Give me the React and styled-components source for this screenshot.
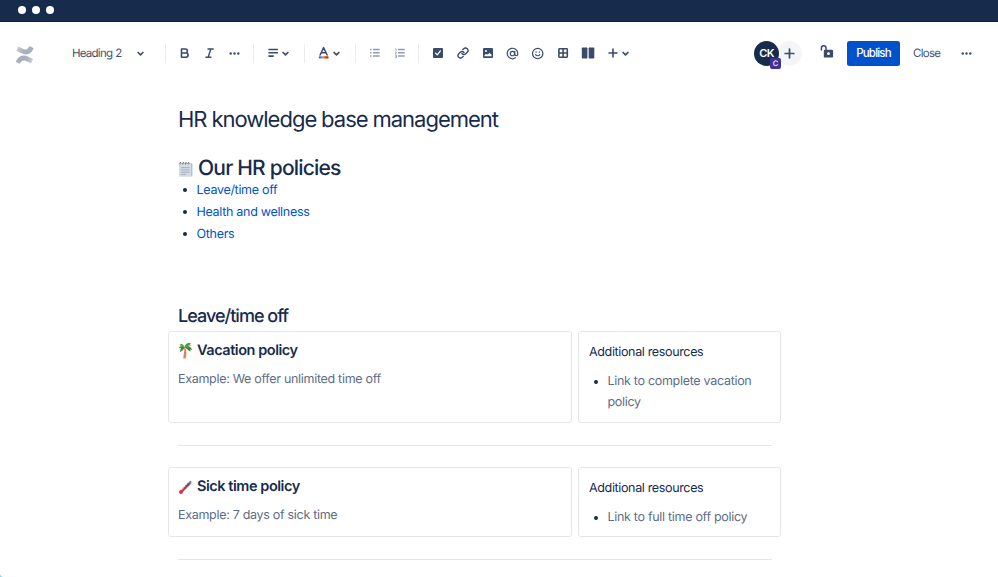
import React from "react";
import styled, { createGlobalStyle } from "styled-components";

const NAVY = "#172b4d";
const ICON = "#3a4b6b";

const GlobalStyle = createGlobalStyle`
  * { box-sizing: border-box; }
  body {
    margin: 0;
    background: #79e2f2;
    color: ${NAVY};
    font-family: Inter, "Liberation Sans", sans-serif;
    text-rendering: geometricPrecision;
    overflow: hidden;
  }
  h1, h2, h3, h4, p, ul { margin: 0; padding: 0; }
  svg { display: block; flex: none; }
`;

const Page = styled.div`
  width: 998px;
  height: 577px;
  overflow: hidden;
  display: flex;
  flex-direction: column;
  background: #fff;
  border-bottom-left-radius: 4px;
`;

const WindowBar = styled.div`
  height: 22px;
  flex: none;
  display: flex;
  gap: 6px;
  padding: 6px 0 0 17.5px;
  background: #172b4d;
  border-bottom: 1px solid #0f2144;
`;

const WindowDot = styled.i`
  width: 8px;
  height: 8px;
  border-radius: 50%;
  background: #fff;
`;

const Toolbar = styled.header`
  height: 62px;
  flex: none;
  display: flex;
  align-items: center;
  padding-left: 15px;
  color: ${ICON};
`;

const Logo = styled.div`
  width: 57px;
  padding-top: 4px;
`;

const StyleSelect = styled.div`
  width: 93px;
  display: flex;
  align-items: center;
  font-size: 11.5px;
  letter-spacing: -0.75px;
  word-spacing: 0.5px;
  color: #42526e;
`;

const SelectLabel = styled.span`
  width: 62.5px;
`;

const Slot = styled.span`
  width: 25px;
  height: 24px;
  flex: none;
  display: flex;
  align-items: center;
  justify-content: center;
  opacity: ${(p) => (p.$muted ? 0.55 : 1)};
`;

const Caret = styled.span`
  width: 11px;
  margin: 0 ${(p) => p.$after || 0}px 0 -5px;
`;

const Divider = styled.span`
  width: 1px;
  height: 19px;
  flex: none;
  margin: 0 6px;
  background: #ebecf0;
  &:first-of-type { margin-left: 0; }
`;

const Actions = styled.div`
  margin-left: auto;
  width: 244px;
  display: flex;
  align-items: center;
`;

const Avatar = styled.span`
  position: relative;
  z-index: 1;
  width: 25px;
  height: 25px;
  border-radius: 50%;
  display: grid;
  place-items: center;
  background: #172b4d;
  color: #fff;
  font-size: 11px;
  font-weight: 600;
  letter-spacing: -0.6px;
`;

const AvatarBadge = styled.span`
  position: absolute;
  right: -2px;
  bottom: -3px;
  width: 11px;
  height: 11px;
  border-radius: 2px;
  display: grid;
  place-items: center;
  background: #403294;
  color: #fff;
  font-size: 7.5px;
  font-weight: 500;
  line-height: 11px;
  letter-spacing: 0;
`;

const AddPerson = styled.span`
  width: 25px;
  height: 25px;
  margin: 0 18px 0 -2px;
  border-radius: 50%;
  display: grid;
  place-items: center;
  background: #f4f5f7;
`;

const PublishButton = styled.button`
  width: 53px;
  height: 25px;
  margin: 0 13px;
  padding: 0;
  border: 0;
  border-radius: 2.5px;
  background: #0052cc;
  color: #fff;
  font: 500 11.5px Inter, "Liberation Sans", sans-serif;
  letter-spacing: -0.8px;
`;

const CloseLabel = styled.span`
  width: 48px;
  font-size: 11.5px;
  letter-spacing: -0.7px;
  color: #42526e;
`;

const Document = styled.main`
  width: 613px;
  margin-left: 168px;
  padding-top: 22px;
`;

const Inset = styled.div`
  padding-left: 10px;
`;

const Title = styled.h1`
  font-size: 22px;
  font-weight: 400;
  line-height: 28px;
  letter-spacing: -1px;
  word-spacing: -0.3px;
  white-space: nowrap;
`;

const SectionTitle = styled.h2`
  margin-top: 21px;
  display: flex;
  align-items: center;
  gap: 4px;
  font-size: 21px;
  font-weight: 550;
  line-height: 28px;
  letter-spacing: -0.8px;
`;

const LinkList = styled.ul`
  list-style: none;
  margin-top: -4px;
`;

const LinkItem = styled.li`
  display: flex;
  align-items: center;
  height: 22px;
  font-size: 12.5px;
  letter-spacing: -0.3px;
  color: #0052cc;
  &::before {
    content: "";
    width: 4px;
    height: 4px;
    margin: 0 9.5px 0 5px;
    border-radius: 50%;
    background: ${NAVY};
  }
`;

const Subtitle = styled.h3`
  margin-top: 60px;
  height: 26px;
  font-size: 18px;
  font-weight: 500;
  line-height: 23px;
  letter-spacing: -0.98px;
`;

const PolicyRow = styled.section`
  display: grid;
  grid-template-columns: 404px 203px;
  gap: 6px;
  width: 613px;
  height: ${(p) => p.$height}px;
`;

const Panel = styled.div`
  border: 1px solid #e4e6ea;
  border-radius: 3px;
  padding: ${(p) => p.$pad};
`;

const PolicyTitle = styled.h4`
  display: flex;
  align-items: center;
  gap: 4px;
  height: 21px;
  font-size: 14.5px;
  font-weight: 600;
  letter-spacing: -0.45px;
`;

const PolicyText = styled.p`
  margin-top: 9px;
  font-size: 12.5px;
  line-height: 20px;
  letter-spacing: -0.3px;
  color: #5e6c84;
`;

const ResourceTitle = styled.p`
  font-size: 12.5px;
  line-height: 20px;
  letter-spacing: -0.35px;
`;

const ResourceItem = styled.p`
  display: flex;
  margin-top: 8px;
  font-size: 12.5px;
  line-height: 21px;
  letter-spacing: -0.3px;
  color: #5e6c84;
  &::before {
    content: "";
    flex: none;
    width: 4px;
    height: 4px;
    margin: 8.5px 9.5px 0 5px;
    border-radius: 50%;
    background: ${NAVY};
  }
`;

const Rule = styled.hr`
  width: 594px;
  height: 1px;
  margin: 22px 0 21px 10px;
  border: 0;
  background: #e4e6ea;
`;

const Chevron = () => (
  <svg width="11" height="11" viewBox="0 0 11 11" fill="none" stroke="currentColor" strokeWidth="1.7" strokeLinecap="round" strokeLinejoin="round">
    <path d="M3.1 4.5 5.5 6.8 7.9 4.5" />
  </svg>
);

const More = () => (
  <svg width="11" height="11" viewBox="0 0 11 11" fill="currentColor">
    <circle cx="1.7" cy="5.5" r="1.2" /><circle cx="5.5" cy="5.5" r="1.2" /><circle cx="9.3" cy="5.5" r="1.2" />
  </svg>
);

const ConfluenceMark = () => (
  <svg width="20" height="20" viewBox="0 0 20 20">
    <defs>
      <linearGradient id="waveTop" x1="1" y1="0" x2="0" y2="0"><stop offset="0" stopColor="#a5afbd" /><stop offset=".6" stopColor="#a9b2bf" /><stop offset="1" stopColor="#c9ced7" /></linearGradient>
      <linearGradient id="waveBottom" x1="0" y1="0" x2="1" y2="0"><stop offset="0" stopColor="#a5afbd" /><stop offset=".6" stopColor="#a9b2bf" /><stop offset="1" stopColor="#c9ced7" /></linearGradient>
    </defs>
    <path d="M3.2 1.5C6.2 3.1 8.5 4.8 10.5 4.6 12.4 4.4 13.4 3.1 14.6 1.1L18.7 3.2C16.7 7.2 14.4 9.3 11.2 9.4 8.1 9.5 5.1 7.6 1.4 6Z" fill="url(#waveTop)" />
    <path d="M.7 16.7C2.7 12.7 5 10.7 8.1 10.5 11.4 10.3 14.3 12.2 18.1 14L16 18.2C12.9 16.8 10.7 15.2 8.6 15.4 6.9 15.6 6 16.9 4.8 18.8Z" fill="url(#waveBottom)" />
  </svg>
);

const Bold = () => (
  <svg width="12" height="12" viewBox="0 0 12 12" fill="none" stroke="currentColor" strokeWidth="1.6" strokeLinejoin="round">
    <path d="M2.5 2h3.9a2 2 0 0 1 0 4H2.5zM2.5 6H7a2.1 2.1 0 0 1 0 4.2H2.5z" />
  </svg>
);

const Italic = () => (
  <svg width="12" height="12" viewBox="0 0 12 12" fill="none" stroke="currentColor" strokeWidth="1.4" strokeLinecap="round">
    <path d="M4 2h5.2M1.9 10.2h5M6.8 2 4.2 10.2" />
  </svg>
);

const AlignLeft = () => (
  <svg width="12" height="12" viewBox="0 0 12 12" fill="none" stroke="currentColor" strokeWidth="1.6" strokeLinecap="round">
    <path d="M2 2.5h8.4M2 5.8h8.4M2 9.1h4.2" />
  </svg>
);

const TextColor = () => (
  <svg width="13" height="14" viewBox="0 0 13 14">
    <defs>
      <linearGradient id="inkBar"><stop offset="0" stopColor="#5243aa" /><stop offset=".3" stopColor="#4c9aff" /><stop offset=".5" stopColor="#ff8b00" /><stop offset=".7" stopColor="#de350b" /><stop offset="1" stopColor="#bf2600" /></linearGradient>
    </defs>
    <path d="M3.1 9 6.6 1.6 10.1 9M4.3 6.7h4.6" fill="none" stroke="currentColor" strokeWidth="1.5" strokeLinecap="round" strokeLinejoin="round" />
    <rect x="1.8" y="10.3" width="9.8" height="2.3" rx=".9" fill="url(#inkBar)" />
  </svg>
);

const BulletList = () => (
  <svg width="12" height="12" viewBox="0 0 12 12" fill="currentColor">
    <path d="M1 1.7h1.5v1.5H1zM1 5h1.5v1.5H1zM1 8.3h1.5v1.5H1zM4 1.7h6.7v1.5H4zM4 5h6.7v1.5H4zM4 8.3h6.7v1.5H4z" />
  </svg>
);

const NumberList = () => (
  <svg width="12" height="12" viewBox="0 0 12 12">
    <path d="M4 1.7h6.7v1.5H4zM4 5h6.7v1.5H4zM4 8.3h6.7v1.5H4z" fill="currentColor" />
    <path d="M1.2 1.8h.9v2M1 5h1.4v.6L1.1 7h1.4M1 8.3h1.5v2.5H1M1.4 9.5h1" fill="none" stroke="currentColor" strokeWidth=".8" />
  </svg>
);

const CheckBox = () => (
  <svg width="12" height="12" viewBox="0 0 12 12">
    <rect x="1" y="1" width="10" height="10" rx="1" fill="currentColor" />
    <path d="m3.6 6.1 1.7 1.8 3.1-4" fill="none" stroke="#fff" strokeWidth="1.3" strokeLinecap="round" strokeLinejoin="round" />
  </svg>
);

const LinkIcon = () => (
  <svg width="12" height="12" viewBox="0 0 24 24" fill="none" stroke="currentColor" strokeWidth="2.7" strokeLinecap="round">
    <path d="M10 13a5 5 0 0 0 7.5.5l3-3a5 5 0 0 0-7.1-7.1l-1.7 1.7" />
    <path d="M14 11a5 5 0 0 0-7.5-.5l-3 3a5 5 0 0 0 7.1 7.1l1.7-1.7" />
  </svg>
);

const ImageIcon = () => (
  <svg width="12" height="12" viewBox="0 0 12 12">
    <rect x="1" y="1" width="10" height="10" rx="1" fill="currentColor" />
    <circle cx="4" cy="4" r="1" fill="#fff" />
    <path d="M2.5 9.3V8l1.6-1.1 1.4.7 2-1.6 2 1.5v1.8z" fill="#fff" />
  </svg>
);

const Mention = () => (
  <svg width="13" height="13" viewBox="0 0 24 24" fill="none" stroke="currentColor" strokeWidth="2.2" strokeLinecap="round">
    <circle cx="12" cy="12" r="4.1" />
    <path d="M16.1 8v5.2a2.8 2.8 0 0 0 5.6 0V12a9.7 9.7 0 1 0-4.2 8" />
  </svg>
);

const Smile = () => (
  <svg width="13" height="13" viewBox="0 0 13 13" fill="none" stroke="currentColor" strokeWidth="1.25" strokeLinecap="round">
    <circle cx="6.7" cy="6.5" r="5.2" />
    <path d="M4.6 7.6c.8 1.6 3.4 1.6 4.2 0" strokeWidth="1.1" />
    <path d="M5.1 5v.2M8.3 5v.2" strokeWidth="1.3" />
  </svg>
);

const TableIcon = () => (
  <svg width="12" height="12" viewBox="0 0 12 12" fill="none" stroke="currentColor" strokeWidth="1.6">
    <rect x="1.9" y="1.8" width="8.4" height="8.4" rx=".6" />
    <path d="M6.1 2v8M2 6h8" />
  </svg>
);

const Columns = () => (
  <svg width="14" height="12" viewBox="0 0 14 12" fill="currentColor">
    <rect x=".8" y=".6" width="5.6" height="10.8" rx=".7" /><rect x="7.7" y=".6" width="5.6" height="10.8" rx=".7" />
  </svg>
);

const Plus = ({ size = 12 }) => (
  <svg width={size} height={size} viewBox="0 0 12 12" fill="none" stroke="currentColor" strokeWidth="1.6" strokeLinecap="round">
    <path d="M6 2v8M2 6h8" />
  </svg>
);

const Unlocked = () => (
  <svg width="14" height="16" viewBox="0 0 14 16">
    <path d="M1.4 5V3.1a2.3 2.3 0 0 1 4.6 0v2.7" fill="none" stroke="currentColor" strokeWidth="1.5" strokeLinecap="round" />
    <rect x="3.8" y="4.8" width="9.3" height="7.8" rx="1.2" fill="currentColor" />
    <circle cx="8.5" cy="8.7" r="1.4" fill="#fff" />
  </svg>
);

const Notepad = () => (
  <svg width="16" height="18" viewBox="0 0 16 18">
    <path d="M12.4 3.3h1.4c.4 0 .6.3.6.7v11.6L12.4 17z" fill="#8fc1ee" />
    <rect x="1" y="2.7" width="12.2" height="14" rx=".8" fill="#d3dbe4" />
    <path d="M3 7.6h8.5M3 9.9h8.5M3 12.2h8.5M3 14.4h5" stroke="#9ba7b7" strokeWidth=".8" />
    <path d="M2.1 4.4c-.5-2 .9-2.4 1.1-1M4.8 4.4c-.5-2 .9-2.4 1.1-1M7.5 4.4c-.5-2 .9-2.4 1.1-1M10.2 4.4c-.5-2 .9-2.4 1.1-1" fill="none" stroke="#4f5660" strokeWidth=".9" />
  </svg>
);

const PalmTree = () => (
  <svg width="15" height="17" viewBox="0 0 15 17">
    <path d="M7 5.1C8.5 8 8.5 12 8 16.4H5.1C5.9 12 6.5 8.5 6.1 5.4Z" fill="#de8b6b" />
    <path d="M6.5 8.2h1.7M6.2 10.6h2.1M5.8 13h2.4" stroke="#c36450" strokeWidth=".6" />
    <path d="M6.7 5.1C4.9 3.3 2.2 3.4.6 6.4L2.9 6.1 1.8 10.2C4 9.3 5.8 7.7 6.9 5.1Z" fill="#448b35" />
    <path d="M6.6 5.2C5.7 2.2 3.3.8 1.1 2.3l1.8.5L1.6 4.6C3.6 4.1 5.3 4.3 6.6 5.2Z" fill="#65a842" />
    <path d="M6.6 5.2C7 1.9 9.5 0 13.4 1.6l-1.9.9 2.2 1.1C10.9 3.3 8.7 4 6.6 5.2Z" fill="#50983b" />
    <path d="M6.5 5c2.2-2 5.9-1.5 7.8 2.9l-2.1-.7.2 2.5C10.4 8.3 8.7 6.7 6.5 5Z" fill="#36782e" />
    <path d="M6.8 4.9c1.6-.3 3.3.2 4.4 1.7" fill="none" stroke="#82bc55" strokeWidth=".8" />
  </svg>
);

const Thermometer = () => (
  <svg width="15" height="16" viewBox="0 0 15 16" strokeLinecap="round">
    <path d="M3 13.1 12.5 3.4" stroke="#cbd2d8" strokeWidth="3.6" />
    <path d="m8.1 7.2 4.2-4.3" stroke="#667785" strokeWidth="1.5" />
    <path d="M3.2 12.9 11.6 4.6" stroke="#df2635" strokeWidth="1.8" />
    <circle cx="3" cy="13" r="1.9" fill="#e52d39" />
    <path d="m6 8.3.9.9M7.8 6.5l.9.9M9.6 4.7l.9.9" stroke="#59434d" strokeWidth=".7" />
  </svg>
);

function Policy({ height, icon, title, text, resource }) {
  return (
    <PolicyRow $height={height}>
      <Panel $pad="8px 9px 0">
        <PolicyTitle>{icon}{title}</PolicyTitle>
        <PolicyText>{text}</PolicyText>
      </Panel>
      <Panel $pad="11px 20px 0 10px">
        <ResourceTitle>Additional resources</ResourceTitle>
        <ResourceItem>{resource}</ResourceItem>
      </Panel>
    </PolicyRow>
  );
}

const insertTools = [CheckBox, LinkIcon, ImageIcon, Mention, Smile, TableIcon, Columns, Plus];

export default function App() {
  return (
    <Page>
      <GlobalStyle />
      <WindowBar><WindowDot /><WindowDot /><WindowDot /></WindowBar>
      <Toolbar>
        <Logo><ConfluenceMark /></Logo>
        <StyleSelect><SelectLabel>Heading 2</SelectLabel><Chevron /></StyleSelect>
        <Divider />
        <Slot><Bold /></Slot>
        <Slot><Italic /></Slot>
        <Slot><More /></Slot>
        <Divider />
        <Slot><AlignLeft /></Slot>
        <Caret $after={7}><Chevron /></Caret>
        <Divider />
        <Slot><TextColor /></Slot>
        <Caret $after={7}><Chevron /></Caret>
        <Divider />
        <Slot $muted><BulletList /></Slot>
        <Slot $muted><NumberList /></Slot>
        <Divider />
        {insertTools.map((Tool, i) => <Slot key={i}><Tool /></Slot>)}
        <Caret><Chevron /></Caret>
        <Actions>
          <Avatar>CK<AvatarBadge>C</AvatarBadge></Avatar>
          <AddPerson><Plus size={13} /></AddPerson>
          <Unlocked />
          <PublishButton>Publish</PublishButton>
          <CloseLabel>Close</CloseLabel>
          <More />
        </Actions>
      </Toolbar>
      <Document>
        <Inset>
          <Title>HR knowledge base management</Title>
          <SectionTitle><Notepad />Our HR policies</SectionTitle>
          <LinkList>
            <LinkItem>Leave/time off</LinkItem>
            <LinkItem>Health and wellness</LinkItem>
            <LinkItem>Others</LinkItem>
          </LinkList>
          <Subtitle>Leave/time off</Subtitle>
        </Inset>
        <Policy height={92} icon={<PalmTree />} title="Vacation policy" text="Example: We offer unlimited time off" resource="Link to complete vacation policy" />
        <Rule />
        <Policy height={70} icon={<Thermometer />} title="Sick time policy" text="Example: 7 days of sick time" resource="Link to full time off policy" />
        <Rule />
      </Document>
    </Page>
  );
}
